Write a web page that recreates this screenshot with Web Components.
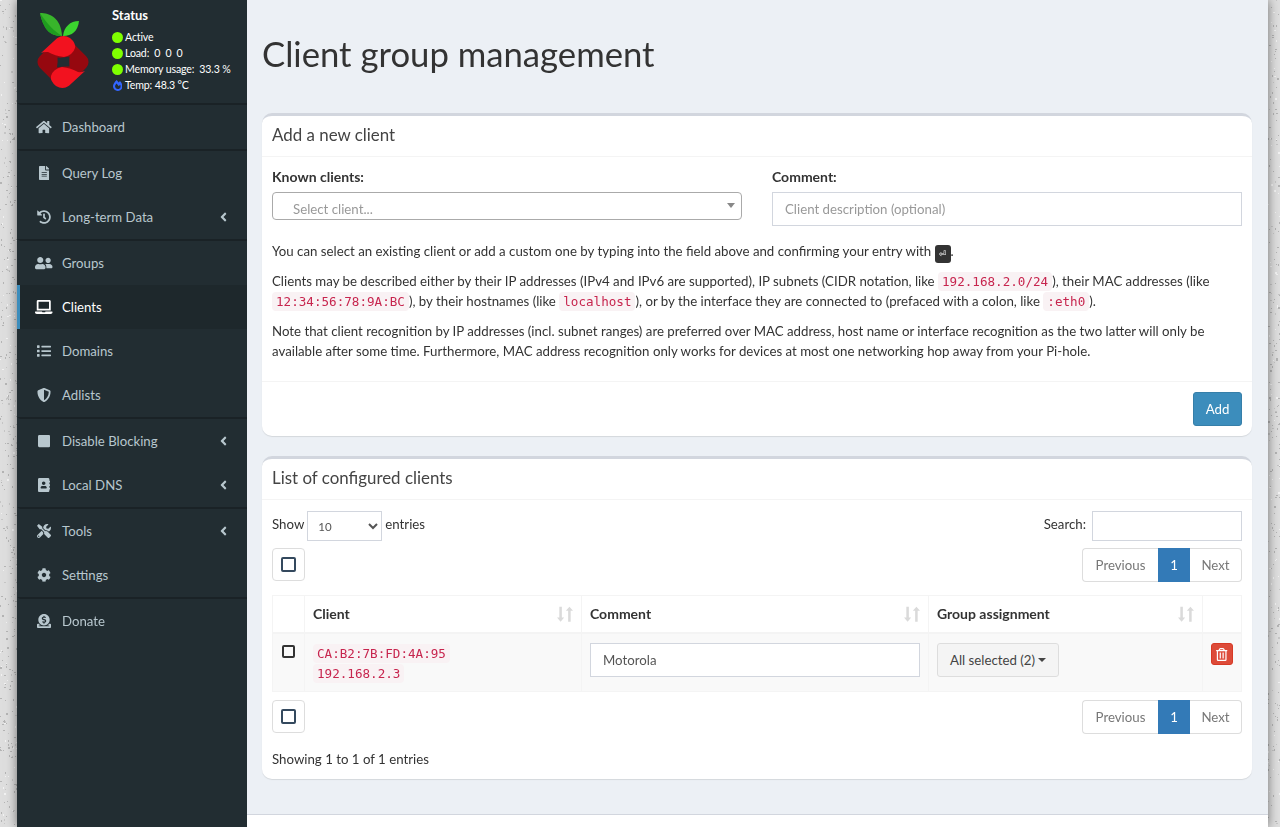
<!DOCTYPE html>
<html lang="en">
<head>
<meta charset="utf-8">
<title>Client group management</title>
<style>
    html, body { margin: 0; height: 827px; overflow: hidden; }
    body {
        background: #dedede;
        font: 13.25px/20px Lato, "Liberation Sans", sans-serif;
        color: #333;
    }
</style>
</head>
<body>
<speckle-backdrop></speckle-backdrop>
<admin-shell>
    <side-bar slot="side"></side-bar>
    <content-header slot="main" heading="Client group management"></content-header>
    <add-client-card slot="main"></add-client-card>
    <client-list-card slot="main"></client-list-card>
</admin-shell>

<script>
const ICONS = {
    home: [576, 'M280.37 148.26L96 300.11V464a16 16 0 0 0 16 16l112.06-.29a16 16 0 0 0 15.92-16V368a16 16 0 0 1 16-16h64a16 16 0 0 1 16 16v95.64a16 16 0 0 0 16 16.05L464 480a16 16 0 0 0 16-16V300L295.67 148.26a12.19 12.19 0 0 0-15.3 0zM571.6 251.47L488 182.56V44.05a12 12 0 0 0-12-12h-56a12 12 0 0 0-12 12v72.61L318.47 43a48 48 0 0 0-61 0L4.34 251.47a12 12 0 0 0-1.6 16.9l25.5 31A12 12 0 0 0 45.15 301l235.22-193.74a12.19 12.19 0 0 1 15.3 0L530.9 301a12 12 0 0 0 16.9-1.6l25.5-31a12 12 0 0 0-1.7-16.93z'],
    file: [384, 'M224 136V0H24C10.7 0 0 10.7 0 24v464c0 13.3 10.7 24 24 24h336c13.3 0 24-10.7 24-24V160H248c-13.2 0-24-10.8-24-24zm64 236c0 6.6-5.4 12-12 12H108c-6.6 0-12-5.4-12-12v-8c0-6.6 5.4-12 12-12h168c6.6 0 12 5.4 12 12v8zm0-64c0 6.6-5.4 12-12 12H108c-6.6 0-12-5.4-12-12v-8c0-6.6 5.4-12 12-12h168c6.6 0 12 5.4 12 12v8zm0-72v8c0 6.6-5.4 12-12 12H108c-6.6 0-12-5.4-12-12v-8c0-6.6 5.4-12 12-12h168c6.6 0 12 5.4 12 12zm96-114.1v6.1H256V0h6.1c6.4 0 12.5 2.5 17 7l97.9 98c4.5 4.5 7 10.6 7 16.9z'],
    history: [512, 'M504 255.531c.253 136.64-111.18 248.372-247.82 248.468-59.015.042-113.223-20.53-155.822-54.911-11.077-8.94-11.905-25.541-1.839-35.607l11.267-11.267c8.609-8.609 22.353-9.551 31.891-1.984C173.062 425.135 212.781 440 256 440c101.705 0 184-82.311 184-184 0-101.705-82.311-184-184-184-48.814 0-93.149 18.969-126.068 49.932l50.754 50.754c10.08 10.08 2.941 27.314-11.313 27.314H24c-8.837 0-16-7.163-16-16V38.627c0-14.254 17.234-21.393 27.314-11.314l49.372 49.372C129.209 34.136 189.552 8 256 8c136.81 0 247.747 110.78 248 247.531zm-180.912 78.784l9.823-12.63c8.138-10.463 6.253-25.542-4.21-33.679L288 256.349V152c0-13.255-10.745-24-24-24h-16c-13.255 0-24 10.745-24 24v135.651l65.409 50.874c10.463 8.137 25.541 6.253 33.679-4.21z'],
    friends: [640, 'M192 256c61.9 0 112-50.1 112-112S253.9 32 192 32 80 82.1 80 144s50.1 112 112 112zm76.8 32h-8.3c-20.8 10-43.9 16-68.5 16s-47.6-6-68.5-16h-8.3C51.6 288 0 339.6 0 403.2V432c0 26.5 21.5 48 48 48h288c26.5 0 48-21.5 48-48v-28.8c0-63.6-51.6-115.2-115.2-115.2zM480 256c53 0 96-43 96-96s-43-96-96-96-96 43-96 96 43 96 96 96zm48 32h-3.8c-13.9 4.8-28.6 8-44.2 8s-30.3-3.2-44.2-8H432c-20.4 0-39.2 5.9-55.7 15.4 24.4 26.3 39.7 61.2 39.7 99.8v38.4c0 2.2-.5 4.3-.6 6.4H592c26.5 0 48-21.5 48-48 0-61.9-50.1-112-112-112z'],
    laptop: [640, 'M624 416H381.54c-.74 19.81-14.71 32-32.74 32H288c-18.69 0-33.02-17.47-32.77-32H16c-8.8 0-16 7.2-16 16v16c0 35.2 28.8 64 64 64h512c35.2 0 64-28.8 64-64v-16c0-8.8-7.2-16-16-16zM576 48c0-26.4-21.6-48-48-48H112C85.6 0 64 21.6 64 48v336h512V48zm-64 272H128V64h384v256z'],
    list: [512, 'M80 368H16a16 16 0 0 0-16 16v64a16 16 0 0 0 16 16h64a16 16 0 0 0 16-16v-64a16 16 0 0 0-16-16zm0-320H16A16 16 0 0 0 0 64v64a16 16 0 0 0 16 16h64a16 16 0 0 0 16-16V64a16 16 0 0 0-16-16zm0 160H16a16 16 0 0 0-16 16v64a16 16 0 0 0 16 16h64a16 16 0 0 0 16-16v-64a16 16 0 0 0-16-16zm416 176H176a16 16 0 0 0-16 16v32a16 16 0 0 0 16 16h320a16 16 0 0 0 16-16v-32a16 16 0 0 0-16-16zm0-320H176a16 16 0 0 0-16 16v32a16 16 0 0 0 16 16h320a16 16 0 0 0 16-16V80a16 16 0 0 0-16-16zm0 160H176a16 16 0 0 0-16 16v32a16 16 0 0 0 16 16h320a16 16 0 0 0 16-16v-32a16 16 0 0 0-16-16z'],
    shield: [512, 'M466.5 83.7l-192-80a48.15 48.15 0 0 0-36.9 0l-192 80C27.7 91.1 16 108.6 16 128c0 198.5 114.5 335.7 221.5 380.3 11.8 4.9 25.1 4.9 36.9 0C360.1 472.6 496 349.3 496 128c0-19.4-11.7-36.9-29.5-44.3zM256.1 446.3l-.1-381 175.9 73.3c-3.3 151.4-82.1 261.1-175.8 307.7z'],
    stop: [448, 'M400 32H48C21.5 32 0 53.5 0 80v352c0 26.5 21.5 48 48 48h352c26.5 0 48-21.5 48-48V80c0-26.5-21.5-48-48-48z'],
    book: [448, 'M436 160c6.6 0 12-5.4 12-12v-40c0-6.6-5.4-12-12-12h-20V48c0-26.5-21.5-48-48-48H48C21.5 0 0 21.5 0 48v416c0 26.5 21.5 48 48 48h320c26.5 0 48-21.5 48-48v-48h20c6.6 0 12-5.4 12-12v-40c0-6.6-5.4-12-12-12h-20v-64h20c6.6 0 12-5.4 12-12v-40c0-6.6-5.4-12-12-12h-20v-64h20zm-228-32c35.3 0 64 28.7 64 64s-28.7 64-64 64-64-28.7-64-64 28.7-64 64-64zm112 236.8c0 10.6-10 19.2-22.4 19.2H118.4C106 384 96 375.4 96 364.8v-19.2c0-31.8 30.1-57.6 67.2-57.6h5c12.3 5.1 25.7 8 39.8 8s27.6-2.9 39.8-8h5c37.1 0 67.2 25.8 67.2 57.6v19.2z'],
    tools: [512, 'M501.1 395.7L384 278.6c-23.1-23.1-57.6-27.6-85.4-13.9L192 158.1V96L64 0 0 64l96 128h62.1l106.6 106.6c-13.6 27.8-9.2 62.3 13.9 85.4l117.1 117.1c14.6 14.6 38.2 14.6 52.7 0l52.7-52.7c14.5-14.6 14.5-38.2 0-52.7zM331.7 225c28.3 0 54.9 11 74.9 31l19.4 19.4c15.8-6.9 30.8-16.5 43.8-29.5 37.1-37.1 49.7-89.3 37.9-136.7-2.2-9-13.5-12.1-20.1-5.5l-74.4 74.4-67.9-11.3L334 98.9l74.4-74.4c6.6-6.6 3.4-17.9-5.7-20.2-47.4-11.7-99.6.9-136.6 37.9-28.5 28.5-41.9 66.1-41.2 103.6l82.1 82.1c8.1-1.9 16.5-2.9 24.7-2.9zm-103.9 82l-56.7-56.7L18.7 402.8c-25 25-25 65.5 0 90.5s65.5 25 90.5 0l123.6-123.6c-7.6-19.9-9.9-41.6-5-62.7zM64 472c-13.2 0-24-10.8-24-24 0-13.3 10.7-24 24-24s24 10.7 24 24c0 13.2-10.7 24-24 24z'],
    cog: [512, 'M487.4 315.7l-42.6-24.6c4.3-23.2 4.3-47 0-70.2l42.6-24.6c4.9-2.8 7.1-8.6 5.5-14-11.1-35.6-30-67.8-54.7-94.6-3.8-4.1-10-5.1-14.8-2.3L380.8 110c-17.9-15.4-38.5-27.3-60.8-35.1V25.8c0-5.6-3.9-10.5-9.4-11.7-36.7-8.2-74.3-7.8-109.2 0-5.5 1.2-9.4 6.1-9.4 11.7V75c-22.2 7.9-42.8 19.8-60.8 35.1L88.7 85.5c-4.9-2.8-11-1.9-14.8 2.3-24.7 26.7-43.6 58.9-54.7 94.6-1.7 5.4.6 11.2 5.5 14L67.3 221c-4.3 23.2-4.3 47 0 70.2l-42.6 24.6c-4.9 2.8-7.1 8.6-5.5 14 11.1 35.6 30 67.8 54.7 94.6 3.8 4.1 10 5.1 14.8 2.3l42.6-24.6c17.9 15.4 38.5 27.3 60.8 35.1v49.2c0 5.6 3.9 10.5 9.4 11.7 36.7 8.2 74.3 7.8 109.2 0 5.5-1.2 9.4-6.1 9.4-11.7v-49.2c22.2-7.9 42.8-19.8 60.8-35.1l42.6 24.6c4.9 2.8 11 1.9 14.8-2.3 24.7-26.7 43.6-58.9 54.7-94.6 1.5-5.5-.7-11.3-5.6-14.1zM256 336c-44.1 0-80-35.9-80-80s35.9-80 80-80 80 35.9 80 80-35.9 80-80 80z'],
    donate: [512, 'M256 416c114.9 0 208-93.1 208-208S370.9 0 256 0 48 93.1 48 208s93.1 208 208 208zM233.8 97.4V80.6c0-9.2 7.4-16.6 16.6-16.6h11.1c9.2 0 16.6 7.4 16.6 16.6v17c15.5.8 30.5 6.1 43 15.4 5.6 4.1 6.2 12.3 1.2 17.1L306 145.6c-3.8 3.7-9.5 3.8-14 1-5.4-3.4-11.4-5.1-17.8-5.1h-38.9c-9 0-16.3 8.2-16.3 18.3 0 8.2 5 15.5 12.1 17.6l62.3 18.7c25.7 7.7 43.7 32.4 43.7 60.1 0 34-26.4 61.5-59.1 62.4v16.8c0 9.2-7.4 16.6-16.6 16.6h-11.1c-9.2 0-16.6-7.4-16.6-16.6v-17c-15.5-.8-30.5-6.1-43-15.4-5.6-4.1-6.2-12.3-1.2-17.1l16.3-15.5c3.8-3.7 9.5-3.8 14-1 5.4 3.4 11.4 5.1 17.8 5.1h38.9c9 0 16.3-8.2 16.3-18.3 0-8.2-5-15.5-12.1-17.6l-62.3-18.7c-25.7-7.7-43.7-32.4-43.7-60.1.1-34 26.4-61.5 59.1-62.4zM480 352h-32.5c-19.6 26-44.6 47.7-73 64h63.8c5.3 0 9.6 3.6 9.6 8v16c0 4.4-4.3 8-9.6 8H73.6c-5.3 0-9.6-3.6-9.6-8v-16c0-4.4 4.3-8 9.6-8h63.8c-28.4-16.3-53.3-38-73-64H32c-17.7 0-32 14.3-32 32v96c0 17.7 14.3 32 32 32h448c17.7 0 32-14.3 32-32v-96c0-17.7-14.3-32-32-32z'],
    angle: [256, 'M31.7 239l136-136c9.4-9.4 24.6-9.4 33.9 0l22.6 22.6c9.4 9.4 9.4 24.6 0 33.9L127.9 256l96.4 96.4c9.4 9.4 9.4 24.6 0 33.9L201.7 409c-9.4 9.4-24.6 9.4-33.9 0l-136-136c-9.5-9.4-9.5-24.6-.1-34z'],
    fire: [448, 'M323.56 51.2c-20.8 19.3-39.58 39.59-56.22 59.97C240.08 73.62 206.28 35.53 168 0 69.74 91.17 0 209.96 0 281.6 0 408.85 100.29 512 224 512s224-103.15 224-230.4c0-53.27-51.98-163.14-124.44-230.4zm-19.47 340.65C282.43 407.01 255.72 416 226.86 416 154.71 416 96 368.26 96 290.75c0-38.61 24.31-72.63 72.79-130.75 6.93 7.98 98.83 125.34 98.83 125.34l58.63-66.88c4.14 6.85 7.91 13.55 11.27 19.97 27.35 52.19 15.81 118.97-33.43 153.42z'],
    trash: [448, 'M268 416h24a12 12 0 0 0 12-12V188a12 12 0 0 0-12-12h-24a12 12 0 0 0-12 12v216a12 12 0 0 0 12 12zM432 80h-82.41l-34-56.7A48 48 0 0 0 274.41 0H173.59a48 48 0 0 0-41.16 23.3L98.41 80H16A16 16 0 0 0 0 96v16a16 16 0 0 0 16 16h16v336a48 48 0 0 0 48 48h288a48 48 0 0 0 48-48V128h16a16 16 0 0 0 16-16V96a16 16 0 0 0-16-16zM171.84 50.91A6 6 0 0 1 177 48h94a6 6 0 0 1 5.15 2.91L293.61 80H154.39zM368 464H80V128h288zm-212-48h24a12 12 0 0 0 12-12V188a12 12 0 0 0-12-12h-24a12 12 0 0 0-12 12v216a12 12 0 0 0 12 12z'],
    sort: [512, 'M75 20h80v350h75L115 500 0 370h75zM357 500V150h-75L397 20 512 150h-75v350z']
};

class FaIcon extends HTMLElement {
    connectedCallback() {
        const [w, d] = ICONS[this.getAttribute('name')];
        this.attachShadow({ mode: 'open' }).innerHTML = `
            <style>
                :host { display: inline-flex; align-items: center; justify-content: center; line-height: 0; }
                svg { height: 1em; width: auto; fill: currentColor; display: block; }
            </style>
            <svg viewBox="0 0 ${w} 512"><path d="${d}"/></svg>`;
    }
}
customElements.define('fa-icon', FaIcon);

// the grainy page background that shows either side of the wrapper
class SpeckleBackdrop extends HTMLElement {
    connectedCallback() {
        let seed = 1337;
        const rnd = () => (seed = (seed * 16807) % 2147483647) / 2147483647;
        let rects = '';
        for (let i = 0; i < 620; i++) {
            const onLeft = rnd() < 0.58;
            const x = Math.floor(onLeft ? rnd() * 17 : 1268 + rnd() * 12);
            const y = Math.floor(rnd() * 827);
            const fill = rnd() < 0.62 ? '#b4b4b4' : (rnd() < 0.5 ? '#f2f2f2' : '#c6c6c6');
            rects += `<rect x="${x}" y="${y}" width="${rnd() < 0.3 ? 2 : 1}" height="${rnd() < 0.3 ? 2 : 1}" fill="${fill}"/>`;
        }
        this.attachShadow({ mode: 'open' }).innerHTML = `
            <style>
                :host { position: fixed; inset: 0; display: block; }
                svg { display: block; }
            </style>
            <svg width="1280" height="827">${rects}</svg>`;
    }
}
customElements.define('speckle-backdrop', SpeckleBackdrop);

class AdminShell extends HTMLElement {
    constructor() {
        super();
        this.attachShadow({ mode: 'open' }).innerHTML = `
            <style>
                :host {
                    position: relative;
                    display: flex;
                    width: 1251px;
                    height: 827px;
                    margin-left: 17px;
                    background: #ecf0f5;
                    box-shadow: 0 0 10px rgba(0,0,0,0.5);
                }
                .main { flex: 1; display: flex; flex-direction: column; min-width: 0; }
                .sections { flex: 1; }
                footer { height: 12px; background: #fff; border-top: 1px solid #d2d6de; }
            </style>
            <slot name="side"></slot>
            <div class="main">
                <div class="sections"><slot name="main"></slot></div>
                <footer></footer>
            </div>`;
    }
}
customElements.define('admin-shell', AdminShell);

class UserPanel extends HTMLElement {
    constructor() {
        super();
        this.attachShadow({ mode: 'open' }).innerHTML = `
            <style>
                :host { display: flex; height: 103px; box-sizing: border-box; color: #fff; }
                .logo { width: 95px; flex: none; }
                .logo svg { display: block; margin: 0 0 0 3px; }
                .info { padding-top: 6px; font-size: 10.6px; line-height: 16px; letter-spacing: -0.15px; }
                .title { font-weight: 700; font-size: 13px; line-height: 19px; margin-bottom: 4px; letter-spacing: 0; }
                .row { display: flex; align-items: center; white-space: pre; height: 16px; }
                .dot { width: 11px; height: 11px; border-radius: 50%; background: #7fff00; margin-right: 2px; flex: none; }
                fa-icon { width: 11px; margin-right: 2px; color: #3366ff; font-size: 11px; }
            </style>
            <div class="logo">
                <svg width="90" height="100" viewBox="0 0 90 100">
                    <path fill="#38b52b" d="M20 13 C30 13 41 18 42 36 C32 36 24 32 20 13Z"/>
                    <path fill="#1f9c1f" d="M20 13 C27 24 34 31 42 36 C32 36 24 32 20 13Z"/>
                    <path fill="#3bd42f" d="M59 21 C50 21 44 27 43 36 C52 36 58 31 59 21Z"/>
                    <rect x="22.6" y="41.6" width="40.8" height="40.8" rx="8" fill="#96080f" transform="rotate(45 43 62)"/>
                    <path fill="#f2121f" d="M21 53 L37 38.3 Q43.3 34 50 38 Q56 43 55 48 Q53 55 44 57 Q35 56 28 52 Q24 51.5 21 53Z"/>
                    <path fill="#f2121f" transform="rotate(180 43 62)" d="M21 53 L37 38.3 Q43.3 34 50 38 Q56 43 55 48 Q53 55 44 57 Q35 56 28 52 Q24 51.5 21 53Z"/>
                    <path fill="#222d32" d="M37.5 57.5 Q43 58 49.5 56.5 Q49 61 49.5 66.5 Q43 66 37 67.5 Q38 62 37.5 57.5Z"/>
                </svg>
            </div>
            <div class="info">
                <div class="title">Status</div>
                <div class="row"><span class="dot"></span>Active</div>
                <div class="row"><span class="dot"></span>Load:  0  0  0</div>
                <div class="row"><span class="dot"></span>Memory usage:  33.3 %</div>
                <div class="row"><fa-icon name="fire"></fa-icon>Temp: 48.3 °C</div>
            </div>`;
    }
}
customElements.define('user-panel', UserPanel);

class NavItem extends HTMLElement {
    connectedCallback() {
        const active = this.hasAttribute('active');
        const sep = this.hasAttribute('sep');
        this.attachShadow({ mode: 'open' }).innerHTML = `
            <style>
                :host {
                    display: flex;
                    align-items: center;
                    height: 44px;
                    box-sizing: content-box;
                    padding: 0 20px 0 15px;
                    border-left: 3px solid ${active ? '#3c8dbc' : 'transparent'};
                    border-top: ${sep ? '2px solid #1a2226' : '0'};
                    background: ${active ? '#1e282c' : 'transparent'};
                    color: ${active ? '#fff' : '#b8c7ce'};
                    font-size: 13.2px;
                }
                .ico { width: 18px; margin-right: 9px; font-size: 14px; flex: none; }
                .label { flex: 1; }
                .arrow { font-size: 14px; }
            </style>
            <fa-icon class="ico" name="${this.getAttribute('icon')}"></fa-icon>
            <span class="label"><slot></slot></span>
            ${this.hasAttribute('arrow') ? '<fa-icon class="arrow" name="angle"></fa-icon>' : ''}`;
    }
}
customElements.define('nav-item', NavItem);

class SideBar extends HTMLElement {
    constructor() {
        super();
        this.attachShadow({ mode: 'open' }).innerHTML = `
            <style>
                :host { display: block; width: 230px; flex: none; background: #222d32; }
            </style>
            <user-panel></user-panel>
            <nav-item icon="home" sep>Dashboard</nav-item>
            <nav-item icon="file" sep>Query Log</nav-item>
            <nav-item icon="history" arrow>Long-term Data</nav-item>
            <nav-item icon="friends" sep>Groups</nav-item>
            <nav-item icon="laptop" active>Clients</nav-item>
            <nav-item icon="list">Domains</nav-item>
            <nav-item icon="shield">Adlists</nav-item>
            <nav-item icon="stop" arrow sep>Disable Blocking</nav-item>
            <nav-item icon="book" arrow>Local DNS</nav-item>
            <nav-item icon="tools" arrow sep>Tools</nav-item>
            <nav-item icon="cog">Settings</nav-item>
            <nav-item icon="donate" sep>Donate</nav-item>`;
    }
}
customElements.define('side-bar', SideBar);

class ContentHeader extends HTMLElement {
    connectedCallback() {
        this.attachShadow({ mode: 'open' }).innerHTML = `
            <style>
                :host { display: block; padding: 34px 15px 39px; }
                h1 { margin: 0; font-size: 34.7px; line-height: 40px; font-weight: 400; color: #333; }
            </style>
            <h1>${this.getAttribute('heading')}</h1>`;
    }
}
customElements.define('content-header', ContentHeader);

class BoxCard extends HTMLElement {
    connectedCallback() {
        this.attachShadow({ mode: 'open' }).innerHTML = `
            <style>
                :host {
                    display: block;
                    margin: 0 16px 20px 15px;
                    background: #fff;
                    border-top: 3px solid #d2d6de;
                    border-radius: 10px;
                    box-shadow: 0 1px 1px rgba(0,0,0,0.1);
                }
                header {
                    height: 40px;
                    padding: 0 10px;
                    border-bottom: 1px solid #f4f4f4;
                    font-size: 16.9px;
                    line-height: 38px;
                    color: #444;
                }
                .body { padding: 10px; }
                .foot { display: flex; justify-content: flex-end; padding: 10px; border-top: 1px solid #f4f4f4; }
                .foot:not(.has) { display: none; }
            </style>
            <header>${this.getAttribute('heading')}</header>
            <div class="body"><slot></slot></div>
            <div class="foot"><slot name="footer"></slot></div>`;
        const foot = this.shadowRoot.querySelector('.foot');
        if (this.querySelector('[slot=footer]')) foot.classList.add('has');
    }
}
customElements.define('box-card', BoxCard);

class InlineCode extends HTMLElement {
    constructor() {
        super();
        this.attachShadow({ mode: 'open' }).innerHTML = `
            <style>
                :host {
                    display: inline;
                    padding: 2px 4px;
                    font: 12.6px/1 "DejaVu Sans Mono", "Liberation Mono", monospace;
                    color: #c7254e;
                    background: #f9f2f4;
                    border-radius: 4px;
                }
            </style>
            <slot></slot>`;
    }
}
customElements.define('inline-code', InlineCode);

class PagerBar extends HTMLElement {
    constructor() {
        super();
        this.attachShadow({ mode: 'open' }).innerHTML = `
            <style>
                :host { display: flex; height: 34px; box-sizing: border-box; color: #777; }
                a { display: flex; align-items: center; justify-content: center; box-sizing: border-box;
                    border: 1px solid #ddd; background: #fff; }
                .prev { width: 76px; border-radius: 4px 0 0 4px; border-right: 0; }
                .cur { width: 32px; background: #337ab7; border-color: #337ab7; color: #fff; }
                .next { width: 52px; border-radius: 0 4px 4px 0; border-left: 0; }
            </style>
            <a class="prev">Previous</a><a class="cur">1</a><a class="next">Next</a>`;
    }
}
customElements.define('pager-bar', PagerBar);

class SelectToggle extends HTMLElement {
    constructor() {
        super();
        this.attachShadow({ mode: 'open' }).innerHTML = `
            <style>
                :host { display: flex; align-items: center; justify-content: center; width: 33px; height: 33px;
                    box-sizing: border-box; border: 1px solid #ddd; border-radius: 4px; background: #fff; }
                i { display: block; width: 15px; height: 15px; box-sizing: border-box;
                    border: 2px solid #34495e; border-radius: 2px; }
            </style>
            <i></i>`;
    }
}
customElements.define('select-toggle', SelectToggle);

class AddClientCard extends HTMLElement {
    constructor() {
        super();
        this.attachShadow({ mode: 'open' }).innerHTML = `
            <style>
                :host { display: block; }
                .cols { display: grid; grid-template-columns: 470px 470px; gap: 30px; margin-bottom: 15px; }
                label { display: block; font-weight: 700; font-size: 14px; margin-bottom: 5px; }
                .picker {
                    position: relative;
                    height: 28px;
                    box-sizing: border-box;
                    padding: 6px 20px 0 20px;
                    border: 1px solid #aaa;
                    border-radius: 4px;
                    color: #999;
                }
                .picker::after {
                    content: "";
                    position: absolute;
                    right: 6px;
                    top: 10px;
                    border: 4px solid transparent;
                    border-top: 5px solid #888;
                    border-bottom: 0;
                }
                input {
                    display: block;
                    width: 100%;
                    height: 34px;
                    box-sizing: border-box;
                    padding: 6px 12px;
                    border: 1px solid #d2d6de;
                    font: inherit;
                    color: #555;
                    outline: 0;
                }
                input::placeholder { color: #999; opacity: 1; }
                p { margin: 0 0 10px; }
                kbd {
                    display: inline-block;
                    width: 16px;
                    height: 18px;
                    margin: -6px 0;
                    text-align: center;
                    font: 9px/18px "DejaVu Sans", sans-serif;
                    color: #fff;
                    background: #333;
                    border-radius: 3px;
                    vertical-align: -1px;
                }
                button {
                    width: 49px;
                    height: 34px;
                    padding: 0;
                    font: inherit;
                    color: #fff;
                    background: #3c8dbc;
                    border: 1px solid #367fa9;
                    border-radius: 3px;
                }
            </style>
            <box-card heading="Add a new client">
                <div class="cols">
                    <div>
                        <label>Known clients:</label>
                        <div class="picker">Select client...</div>
                    </div>
                    <div>
                        <label>Comment:</label>
                        <input type="text" placeholder="Client description (optional)">
                    </div>
                </div>
                <p>You can select an existing client or add a custom one by typing into the field above and confirming your entry with <kbd>⏎</kbd>.</p>
                <p>Clients may be described either by their IP addresses (IPv4 and IPv6 are supported), IP subnets (CIDR notation, like <inline-code>192.168.2.0/24</inline-code>), their MAC addresses (like <inline-code>12:34:56:78:9A:BC</inline-code>), by their hostnames (like <inline-code>localhost</inline-code>), or by the interface they are connected to (prefaced with a colon, like <inline-code>:eth0</inline-code>).</p>
                <p>Note that client recognition by IP addresses (incl. subnet ranges) are preferred over MAC address, host name or interface recognition as the two latter will only be available after some time. Furthermore, MAC address recognition only works for devices at most one networking hop away from your Pi-hole.</p>
                <button slot="footer">Add</button>
            </box-card>`;
    }
}
customElements.define('add-client-card', AddClientCard);

class ClientListCard extends HTMLElement {
    constructor() {
        super();
        this.attachShadow({ mode: 'open' }).innerHTML = `
            <style>
                :host { display: block; }
                .bar { display: flex; justify-content: space-between; align-items: center; }
                .top { margin-top: 1px; height: 30px; }
                .tools { height: 34px; margin-top: 7px; align-items: flex-start; }
                .tools.low { margin-top: 8px; }
                .len, .find { display: flex; align-items: center; gap: 3px; }
                .len span, .find span { margin-bottom: 4px; }
                select {
                    width: 75px;
                    height: 30px;
                    padding: 0 6px;
                    font: 11.5px Lato, sans-serif;
                    color: #555;
                    background: #fff;
                    border: 1px solid #d2d6de;
                }
                .find { gap: 6px; }
                .find input { width: 150px; height: 30px; box-sizing: border-box; border: 1px solid #d2d6de; outline: 0; }
                table {
                    width: 970px;
                    margin-top: 13px;
                    table-layout: fixed;
                    border-collapse: separate;
                    border-spacing: 0;
                    border-left: 1px solid #f4f4f4;
                    border-top: 1px solid #f4f4f4;
                }
                th, td { border-right: 1px solid #f4f4f4; border-bottom: 1px solid #f4f4f4; padding: 0 8px; box-sizing: border-box; }
                th { height: 38px; text-align: left; font-weight: 700; font-size: 14px; border-bottom-width: 2px; }
                th .in { display: flex; align-items: center; justify-content: space-between; }
                th fa-icon { font-size: 16px; color: #dadada; }
                td { height: 58px; background: #f9f9f9; vertical-align: top; padding-top: 9px; }
                .tick { display: block; width: 13px; height: 13px; box-sizing: border-box; margin: 2px 0 0 1px;
                    border: 2px solid #333; border-radius: 2px; }
                .macs { line-height: 20px; }
                td input { display: block; width: 100%; height: 34px; box-sizing: border-box; padding: 6px 12px;
                    font: inherit; color: #555; border: 1px solid #d2d6de; outline: 0; }
                .group {
                    display: inline-flex;
                    align-items: center;
                    gap: 3px;
                    height: 34px;
                    box-sizing: border-box;
                    padding: 0 12px;
                    font: inherit;
                    color: #444;
                    background: #f4f4f4;
                    border: 1px solid #ddd;
                    border-radius: 3px;
                }
                .group::after {
                    content: "";
                    border: 4px solid transparent;
                    border-top-color: #444;
                    border-bottom: 0;
                }
                .del {
                    display: flex;
                    align-items: center;
                    justify-content: center;
                    width: 22px;
                    height: 22px;
                    padding: 0;
                    color: #fff;
                    font-size: 13px;
                    background: #dd4b39;
                    border: 1px solid #d73925;
                    border-radius: 3px;
                }
                .info { margin-top: 15px; }
            </style>
            <box-card heading="List of configured clients">
                <div class="bar top">
                    <div class="len"><span>Show</span> <select><option>10</option></select> <span>entries</span></div>
                    <div class="find"><span>Search:</span> <input type="search"></div>
                </div>
                <div class="bar tools"><select-toggle></select-toggle><pager-bar></pager-bar></div>
                <table>
                    <colgroup><col style="width:32px"><col style="width:277px"><col style="width:347px"><col style="width:274px"><col style="width:39px"></colgroup>
                    <thead>
                        <tr>
                            <th></th>
                            <th><div class="in">Client<fa-icon name="sort"></fa-icon></div></th>
                            <th><div class="in">Comment<fa-icon name="sort"></fa-icon></div></th>
                            <th><div class="in">Group assignment<fa-icon name="sort"></fa-icon></div></th>
                            <th></th>
                        </tr>
                    </thead>
                    <tbody>
                        <tr>
                            <td><span class="tick"></span></td>
                            <td class="macs"><inline-code>CA:B2:7B:FD:4A:95</inline-code><br><inline-code>192.168.2.3</inline-code></td>
                            <td><input type="text" value="Motorola"></td>
                            <td><span class="group">All selected (2)</span></td>
                            <td><button class="del"><fa-icon name="trash"></fa-icon></button></td>
                        </tr>
                    </tbody>
                </table>
                <div class="bar tools low"><select-toggle></select-toggle><pager-bar></pager-bar></div>
                <div class="info">Showing 1 to 1 of 1 entries</div>
            </box-card>`;
    }
}
customElements.define('client-list-card', ClientListCard);
</script>
</body>
</html>
